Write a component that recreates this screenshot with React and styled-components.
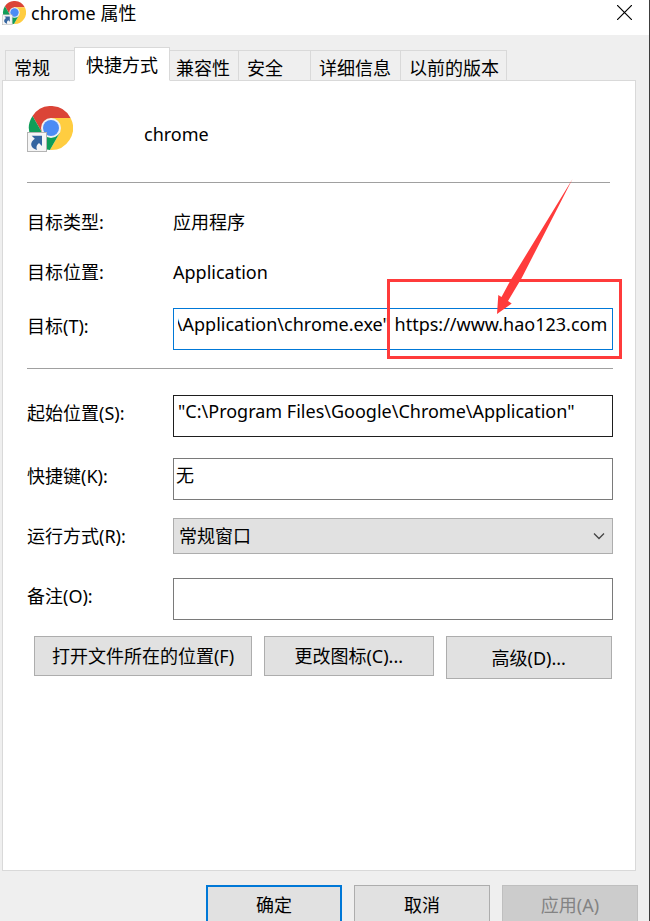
import React, { useLayoutEffect, useRef } from 'react';
import styled, { createGlobalStyle } from 'styled-components';

const TABS = [
    { title: '常规', width: 70, indent: 8 },
    { title: '快捷方式', width: 96, indent: 11, active: true },
    { title: '兼容性', width: 70, indent: 6 },
    { title: '安全', width: 73, indent: 8 },
    { title: '详细信息', width: 91, indent: 8 },
    { title: '以前的版本', width: 107, indent: 8 },
];

const TARGET = '"C:\\Program Files\\Google\\Chrome\\Application\\chrome.exe" https://www.hao123.com';
const START_IN = '"C:\\Program Files\\Google\\Chrome\\Application"';

const ChromeIcon = ({ size }) => (
    <svg width={size} height={size} viewBox="0 0 46 46" aria-hidden="true">
        <path d="M43.6 12H24L15.34 27L5.54 10A22 22 0 0 1 43.6 12Z" fill="#db4437"/>
        <path d="M43.6 12A22 22 0 0 1 22.9 44L32.66 27L24 12Z" fill="#ffcd40"/>
        <path d="M22.9 44A22 22 0 0 1 5.54 10L15.34 27H32.66Z" fill="#0f9d58"/>
        <circle cx="24" cy="22" r="10" fill="#f1f1f1"/>
        <circle cx="24" cy="22" r="8" fill="#4c8bf5"/>
        <rect x="0.5" y="26.5" width="19" height="19" fill="#f5f5f5" stroke="#b4b4b4"/>
        <path d="M4.7 29.7H15V40L12 37C9.6 38.8 8.8 41 10 44C3 42 2.4 36.6 7.8 32.8Z" fill="#3465a0"/>
    </svg>
);

// keeps the end of a long command line in view
const TargetInput = (props) => {
    const ref = useRef(null);

    useLayoutEffect(() => {
        ref.current.scrollLeft = ref.current.scrollWidth;
    }, []);

    return <TextInput ref={ref} {...props}/>;
};

const App = () => (
    <Dialog>
        <GlobalStyle/>

        <TitleBar>
            <ChromeIcon size={24}/>
            <Title>chrome 属性</Title>
            <CloseButton aria-label="关闭">
                <svg width="15" height="15" viewBox="0 0 15 15">
                    <path d="M0 0L15 15M15 0L0 15" stroke="#000" strokeWidth="1.2"/>
                </svg>
            </CloseButton>
        </TitleBar>

        <TabList role="tablist">
            {TABS.map(({ title, width, indent, active }) => (
                <Tab
                    key={title}
                    role="tab"
                    aria-selected={!!active}
                    $width={width}
                    $indent={indent}
                    $active={active}
                >
                    {title}
                </Tab>
            ))}
        </TabList>

        <Panel role="tabpanel">
            <Header>
                <ChromeIcon size={46}/>
                <ShortcutName>chrome</ShortcutName>
            </Header>
            <Separator $inset={3}/>

            <InfoList>
                <dt>目标类型:</dt>
                <dd>应用程序</dd>
                <dt>目标位置:</dt>
                <dd>Application</dd>
            </InfoList>

            <Field $top={23}>
                <Label htmlFor="target">目标(T):</Label>
                <Control>
                    <TargetInput id="target" defaultValue={TARGET} $border="#0078d7"/>
                    <HighlightBox/>
                    <Arrow width="90" height="150" viewBox="0 0 90 150" aria-hidden="true">
                        <path
                            d="M82.5 9L20.7 110L11.5 127L8.3 125L7 144L21.7 133.5L18 131L31.7 108Z"
                            fill="#ff3b3b"
                        />
                    </Arrow>
                </Control>
            </Field>
            <Separator $top={18}/>

            <Field $top={26}>
                <Label htmlFor="start">起始位置(S):</Label>
                <Control>
                    <TextInput id="start" defaultValue={START_IN} $border="#1e1e1e"/>
                </Control>
            </Field>
            <Field $top={21}>
                <Label htmlFor="hotkey">快捷键(K):</Label>
                <Control>
                    <TextInput id="hotkey" defaultValue="无" $indent={2}/>
                </Control>
            </Field>
            <Field $top={18}>
                <Label htmlFor="run">运行方式(R):</Label>
                <Control>
                    <Select id="run">
                        <option>常规窗口</option>
                    </Select>
                    <Chevron width="12" height="8" viewBox="0 0 12 8" aria-hidden="true">
                        <path d="M1 1.5L6 6.5L11 1.5" fill="none" stroke="#444" strokeWidth="1.3"/>
                    </Chevron>
                </Control>
            </Field>
            <Field $top={24}>
                <Label htmlFor="comment">备注(O):</Label>
                <Control>
                    <TextInput id="comment" defaultValue=""/>
                </Control>
            </Field>

            <Actions>
                <Button $grow={218}>打开文件所在的位置(F)</Button>
                <Button $grow={169}>更改图标(C)...</Button>
                <Button $grow={166} $height={43}>高级(D)...</Button>
            </Actions>
        </Panel>

        <Footer>
            <FooterButton $primary>确定</FooterButton>
            <FooterButton>取消</FooterButton>
            <FooterButton disabled>应用(A)</FooterButton>
        </Footer>
    </Dialog>
);

export default App;

const GlobalStyle = createGlobalStyle`
    * {
        box-sizing: border-box;
    }

    body {
        margin: 0;
    }

    body, button, input, select {
        font-family: "Noto Sans", "Noto Sans CJK SC", sans-serif;
        font-size: 18px;
        line-height: 26px;
        color: #000;
    }
`;

const Dialog = styled.main`
    display: flex;
    flex-direction: column;
    height: 100vh;
    overflow: hidden;
    background-color: #efefef;
    border-right: 1px solid #3c3c3c;
`;

const TitleBar = styled.header`
    display: flex;
    flex: none;
    align-items: center;
    height: 35px;
    padding: 0 15px 10px 2px;
    background-color: white;
`;

const Title = styled.h1`
    flex: 1;
    margin: 0 0 0 5px;
    font-size: 18px;
    font-weight: 400;
`;

const CloseButton = styled.button`
    display: flex;
    padding: 0 2px;
    background: none;
    border: none;
`;

const TabList = styled.div`
    display: flex;
    flex: none;
    align-items: flex-end;
    height: 45px;
    padding-left: 5px;
`;

const Tab = styled.button`
    position: relative;
    width: ${props => props.$width}px;
    height: ${props => props.$active ? 34 : 31}px;
    margin: 0 -1px -1px 0;
    padding: ${props => props.$active ? 1 : 4}px 0 0 ${props => props.$indent}px;
    text-align: left;
    white-space: nowrap;
    background-color: ${props => props.$active ? 'white' : '#efefef'};
    border: 1px solid #d9d9d9;
    border-bottom-color: ${props => props.$active ? 'white' : '#d9d9d9'};
    z-index: ${props => props.$active ? 1 : 0};
`;

const Panel = styled.section`
    flex: 1;
    min-height: 0;
    margin: 0 13px 0 2px;
    padding: 25px 22px 0 24px;
    background-color: white;
    border: 1px solid #d9d9d9;
`;

const Header = styled.div`
    display: flex;
    height: 76px;
`;

const ShortcutName = styled.span`
    margin: 15px 0 0 71px;
`;

const Separator = styled.hr`
    height: 1px;
    margin: ${props => props.$top || 0}px ${props => props.$inset || 0}px 0 0;
    background-color: #a0a0a0;
    border: none;
`;

const InfoList = styled.dl`
    display: grid;
    grid-template-columns: 146px 1fr;
    row-gap: 24px;
    margin: 26px 0 0;

    dd {
        margin: 0;
    }
`;

const Field = styled.div`
    display: flex;
    align-items: flex-start;
    margin-top: ${props => props.$top}px;
`;

const Label = styled.label`
    flex: none;
    width: 146px;
    line-height: 36px;
`;

const Control = styled.div`
    position: relative;
    display: flex;
    flex: 1;
`;

const TextInput = styled.input`
    width: 100%;
    height: 42px;
    padding: 0 5px 10px ${props => props.$indent || 4}px;
    background-color: white;
    border: 1px solid ${props => props.$border || '#7a7a7a'};
    border-radius: 0;
    outline: none;
`;

const Select = styled.select`
    width: 100%;
    height: 36px;
    padding: 0 30px 0 5px;
    appearance: none;
    background-color: #e1e1e1;
    border: 1px solid #adadad;
    border-radius: 0;
`;

const Chevron = styled.svg`
    position: absolute;
    top: 14px;
    right: 8px;
    pointer-events: none;
`;

const HighlightBox = styled.div`
    position: absolute;
    top: -29px;
    right: -9px;
    width: 235px;
    height: 80px;
    border: 3px solid #ff3b3b;
    pointer-events: none;
`;

const Arrow = styled.svg`
    position: absolute;
    top: -138px;
    right: 33px;
    pointer-events: none;
`;

const Actions = styled.div`
    display: flex;
    align-items: flex-start;
    gap: 12px;
    margin: 16px 1px 0 7px;
`;

const Button = styled.button`
    flex: ${props => props.$grow || 1} 1 0;
    height: ${props => props.$height || 40}px;
    padding: 0;
    white-space: nowrap;
    background-color: #e1e1e1;
    border: 1px solid #adadad;
`;

const Footer = styled.footer`
    display: flex;
    flex: none;
    justify-content: flex-end;
    gap: 12px;
    height: 50px;
    padding: 14px 11px 0;
`;

const FooterButton = styled(Button)`
    flex: none;
    width: 136px;
    border: ${props => props.$primary ? '2px solid #0078d7' : '1px solid #adadad'};

    &:disabled {
        color: #838383;
        background-color: #cccccc;
        border-color: #bfbfbf;
    }
`;
